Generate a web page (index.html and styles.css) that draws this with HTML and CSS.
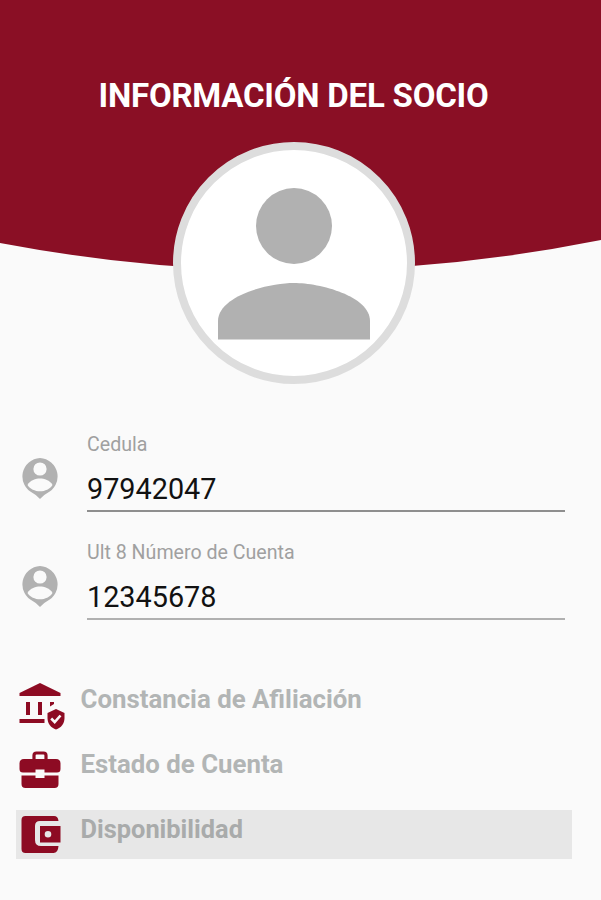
FILE: index.html
```
<!DOCTYPE html>
<html lang="es">
<head>
<meta charset="UTF-8">
<meta name="viewport" content="width=device-width, initial-scale=1.0">
<title>Información del Socio</title>
<link rel="stylesheet" href="styles.css">
</head>

<body>

<header class="header">
    <svg class="header-bg" viewBox="0 0 601 272" preserveAspectRatio="none">
        <path d="M0 0H601V240Q300 300 0 243Z" fill="#8a0f25"/>
    </svg>
    <h1 class="title">INFORMACIÓN DEL SOCIO</h1>
    <div class="avatar">
        <svg width="152" height="152" viewBox="0 0 152 152" fill="#b1b1b1">
            <circle cx="76" cy="38" r="38"/>
            <path d="M0 151.500V133C0 108 50 95 76 95S152 108 152 133V151.500Z"/>
        </svg>
    </div>
</header>

<form class="form">
    <div class="field">
        <svg class="field-icon" viewBox="0 0 36 41">
            <path d="M18 0A18.500 18.500 0 0 0 11 35.200Q14 36.500 18 41Q22 36.500 25 35.200A18.500 18.500 0 0 0 18 0Z" fill="#b1b1b1"/>
            <circle cx="18" cy="11" r="6.600" fill="#fafafa"/>
            <path d="M5.500 27C8 22 14 20.500 18 20.500S28 22 30.500 27C28 31 23 33.300 18 33.300S8 31 5.500 27Z" fill="#fafafa"/>
        </svg>
        <div class="field-body">
            <label class="label" for="cedula">Cedula</label>
            <input class="input" id="cedula" type="text" value="97942047">
        </div>
    </div>
    <div class="field">
        <svg class="field-icon" viewBox="0 0 36 41">
            <path d="M18 0A18.500 18.500 0 0 0 11 35.200Q14 36.500 18 41Q22 36.500 25 35.200A18.500 18.500 0 0 0 18 0Z" fill="#b1b1b1"/>
            <circle cx="18" cy="11" r="6.600" fill="#fafafa"/>
            <path d="M5.500 27C8 22 14 20.500 18 20.500S28 22 30.500 27C28 31 23 33.300 18 33.300S8 31 5.500 27Z" fill="#fafafa"/>
        </svg>
        <div class="field-body">
            <label class="label" for="cuenta">Ult 8 Número de Cuenta</label>
            <input class="input light" id="cuenta" type="text" value="12345678">
        </div>
    </div>
</form>

<nav class="menu">
    <a class="menu-item">
        <svg class="menu-icon" viewBox="0 0 48 48" fill="#8d0b23">
            <path d="M3.500 14V11L24 1L44.500 11V14Z"/>
            <path d="M10 20h4v13h-4zM22 20h4v13h-4zM34 20h4v2l-4 2.500zM3.500 37h25v4h-25z"/>
            <path d="M40 27L48.500 31V36C48.500 41.500 45 46 40 47.500C35 46 31.500 41.500 31.500 36V31Z"/>
            <path d="M35.200 36.500L38.700 40L44.500 33.500" fill="none" stroke="#fafafa" stroke-width="2.600"/>
        </svg>
        <span class="menu-text">Constancia de Afiliación</span>
    </a>
    <a class="menu-item">
        <svg class="menu-icon" viewBox="0 0 48 48" fill="#8d0b23">
            <path d="M18 12V8.500Q18 6 20.500 6H27.500Q30 6 30 8.500V12" fill="none" stroke="#8d0b23" stroke-width="3.200"/>
            <path d="M8 12H40Q44.500 12 44.500 16.500V22Q44.500 25.500 41 25.500H28.500V22.500H19.500V25.500H7Q3.500 25.500 3.500 22V16.500Q3.500 12 8 12Z"/>
            <path d="M5.500 28.500H19.500V31H28.500V28.500H42.500V37Q42.500 41 38.500 41H9.500Q5.500 41 5.500 37Z"/>
        </svg>
        <span class="menu-text">Estado de Cuenta</span>
    </a>
    <a class="menu-item active">
        <svg class="menu-icon" viewBox="0 0 48 48" fill="#8d0b23">
            <path d="M9.500 4H38Q42 4 42.500 9H24Q19 9 19 14V28Q19 34 25 34H42.500Q42 41 37.500 41H9.500Q5.500 41 5.500 37V8Q5.500 4 9.500 4Z"/>
            <path fill-rule="evenodd" d="M24 14H44.500V30.500H24ZM32 19A3.300 3.300 0 1 0 32 25.600A3.300 3.300 0 1 0 32 19Z"/>
        </svg>
        <span class="menu-text">Disponibilidad</span>
    </a>
</nav>

</body>
</html>
```

FILE: styles.css
```
body {
    margin: 0;
    height: 900px;
    overflow: hidden;
    background: #fafafa;
    font-family: Roboto, sans-serif;
}

.header {
    position: relative;
    display: flex;
    flex-direction: column;
    align-items: center;
    padding-top: 76px;
    padding-right: 14px;
}

/* curved red backdrop behind title and avatar */
.header-bg {
    position: absolute;
    top: 0;
    left: 0;
    width: 100%;
    height: 272px;
    z-index: -1;
}

.title {
    margin: 0 0 26px;
    color: white;
    font-size: 33px;
    line-height: 40px;
    font-weight: 700;
    letter-spacing: -0.22px;
    white-space: nowrap;
}

.avatar {
    box-sizing: border-box;
    width: 242px;
    height: 242px;
    padding-top: 38px;
    border: 8px solid #ddd;
    border-radius: 50%;
    background: white;
    text-align: center;
}

.form {
    display: flex;
    flex-direction: column;
    gap: 28px;
    padding: 48px 36px 0 22px;
}

.field {
    display: flex;
    gap: 29px;
}

.field-icon {
    width: 36px;
    height: 41px;
    margin-top: 26px;
}

.field-body {
    flex: 1;
    display: flex;
    flex-direction: column;
}

.label {
    color: #a0a0a0;
    font-size: 19.6px;
    line-height: 26px;
}

.input {
    box-sizing: border-box;
    width: 100%;
    height: 54px;
    margin: 0;
    padding: 9px 0 0;
    border: none;
    border-bottom: 2px solid #8e8e8e;
    background: none;
    color: #111;
    font-family: inherit;
    font-size: 28.8px;
    outline: none;
}

.input.light {
    border-bottom-color: #b0b0b0;
}

.menu {
    display: flex;
    flex-direction: column;
    gap: 16px;
    padding: 60px 29px 0 16px;
}

.menu-item {
    display: flex;
    height: 49px;
    gap: 16.500px;
}

.menu-item.active {
    background: #e7e7e7;
}

.menu-icon {
    width: 48px;
    height: 48px;
    margin-top: 2px;
    overflow: visible;
}

.menu-text {
    color: #b2b5b5;
    font-size: 25.8px;
    line-height: 38px;
    font-weight: 700;
}

.active .menu-text {
    color: #a9abab;
    font-size: 25.4px;
}
```
